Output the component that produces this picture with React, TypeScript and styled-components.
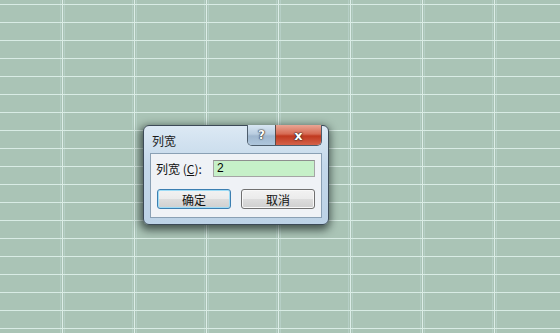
import React from "react";
import styled, { createGlobalStyle } from "styled-components";

const GlobalStyle = createGlobalStyle`
  html, body {
    margin: 0;
    padding: 0;
  }
  body {
    font-family: "Noto Sans CJK SC", "Liberation Sans", sans-serif;
  }
`;

const Sheet = styled.div`
  position: relative;
  width: 560px;
  height: 333px;
  overflow: hidden;
  background-color: #aac4b6;
  background-image:
    repeating-linear-gradient(
      to bottom,
      transparent 0,
      transparent 4px,
      #d9ece5 4px,
      #d9ece5 5px,
      transparent 5px,
      transparent 18px
    ),
    repeating-linear-gradient(
      to right,
      transparent 0,
      transparent 60px,
      #b6cfc6 60px,
      #b6cfc6 61px,
      transparent 61px,
      transparent 62px,
      #dcede8 62px,
      #dcede8 63px,
      transparent 63px,
      transparent 64px,
      #b6cfc6 64px,
      #b6cfc6 65px,
      transparent 65px,
      transparent 72px
    );
`;

const Dialog = styled.div`
  position: absolute;
  left: 143px;
  top: 125px;
  width: 186px;
  height: 100px;
  box-sizing: border-box;
  border: 1px solid #3c4a57;
  border-radius: 6px;
  background: linear-gradient(to bottom, #dce9f4 0%, #c4d8ea 40%, #bcd2e6 100%);
  box-shadow: -1px 3px 9px 2px rgba(15, 25, 25, 0.65);
  display: flex;
  flex-direction: column;
  padding: 0 6px 6px 6px;
`;

const TitleBar = styled.div`
  height: 27px;
  display: flex;
  align-items: center;
  position: relative;
`;

const Title = styled.span`
  font-size: 12px;
  color: #1a1a1a;
  margin-left: 2px;
  margin-top: 2px;
`;

const CaptionButtons = styled.div`
  position: absolute;
  top: -1px;
  right: 0px;
  display: flex;
  border: 1px solid #4d5d6c;
  border-top: none;
  border-radius: 0 0 5px 5px;
  overflow: hidden;
  height: 20px;
`;

const CaptionButton = styled.div<{ $variant: "help" | "close" }>`
  width: ${(p) => (p.$variant === "help" ? "27px" : "45px")};
  height: 100%;
  display: flex;
  align-items: center;
  justify-content: center;
  font-family: "DejaVu Sans", sans-serif;
  font-weight: bold;
  font-size: ${(p) => (p.$variant === "help" ? "12px" : "13px")};
  color: #ffffff;
  text-shadow: 0 0 1px #222, 0 0 1px #222, 0 0 2px #333;
  background: ${(p) =>
    p.$variant === "help"
      ? "linear-gradient(to bottom, #d8e6f2 0%, #b9cde0 45%, #9fb7cf 55%, #aec6dc 100%)"
      : "linear-gradient(to bottom, #e9a595 0%, #d66a52 45%, #c0391f 55%, #d4624a 100%)"};
  border-left: ${(p) => (p.$variant === "close" ? "1px solid #5a4a48" : "none")};
`;

const Client = styled.div`
  flex: 1;
  border: 1px solid #8aa0b4;
  background: #eff2f6;
  display: flex;
  flex-direction: column;
  padding: 6px 6px 0 5px;
  gap: 12px;
`;

const Row = styled.div`
  display: flex;
  align-items: center;
`;

const Label = styled.span`
  font-size: 12px;
  color: #111;
  width: 57px;
  white-space: nowrap;
`;

const Input = styled.div`
  width: 102px;
  height: 17px;
  box-sizing: border-box;
  border: 1px solid #a5a5a5;
  border-top-color: #8e8e8e;
  background: #c6f0c8;
  font-size: 12px;
  line-height: 15px;
  padding-left: 3px;
  color: #000;
  font-family: "Liberation Sans", sans-serif;
`;

const ButtonRow = styled.div`
  display: flex;
  gap: 10px;
  padding-left: 1px;
`;

const Button = styled.div<{ $default?: boolean }>`
  width: 74px;
  height: 20px;
  box-sizing: border-box;
  border: 1px solid ${(p) => (p.$default ? "#3c7fb1" : "#707070")};
  border-radius: 3px;
  background: linear-gradient(to bottom, #f2f2f2 0%, #ebebeb 50%, #dddddd 51%, #cfcfcf 100%);
  box-shadow: ${(p) => (p.$default ? "inset 0 0 0 1px #9edcf6" : "inset 0 0 0 1px #f8f8f8")};
  display: flex;
  align-items: center;
  justify-content: center;
  font-size: 12px;
  color: #111;
`;

export default function App() {
  return (
    <>
      <GlobalStyle />
      <Sheet>
        <Dialog>
          <TitleBar>
            <Title>列宽</Title>
            <CaptionButtons>
              <CaptionButton $variant="help">?</CaptionButton>
              <CaptionButton $variant="close">x</CaptionButton>
            </CaptionButtons>
          </TitleBar>
          <Client>
            <Row>
              <Label>列宽 (<u>C</u>):</Label>
              <Input>2</Input>
            </Row>
            <ButtonRow>
              <Button $default>确定</Button>
              <Button>取消</Button>
            </ButtonRow>
          </Client>
        </Dialog>
      </Sheet>
    </>
  );
}
